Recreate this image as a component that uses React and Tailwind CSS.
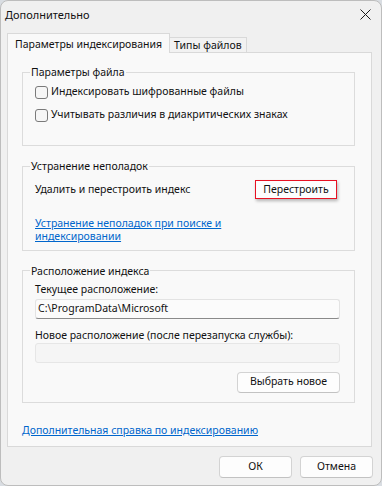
import React from "react";

const font = { fontFamily: '"Noto Sans", "Liberation Sans", sans-serif' };

function Checkbox({ label }) {
  return (
    <label className="flex h-[18px] items-center gap-[3px]">
      <span className="h-[13px] w-[13px] rounded-[3px] border border-[#7a7a7a] bg-[#f6f6f6]" />
      <span>{label}</span>
    </label>
  );
}

function Group({ title, className = "", children }) {
  return (
    <fieldset className={`border border-[#dcdcdc] pl-[12px] pr-[14px] ${className}`}>
      <legend className="-ml-[5px] px-[1px] leading-[16px]">{title}</legend>
      {children}
    </fieldset>
  );
}

function WinButton({ children, className = "" }) {
  return (
    <button className={`flex items-center justify-center rounded-[4px] border border-[#d3d3d3] border-b-[#c2c2c2] bg-[#fdfdfd] text-[#111] ${className}`}>
      {children}
    </button>
  );
}

export default function App() {
  return (
    <div className="h-[486px] w-[382px] bg-[#d9dde2]" style={font}>
      <div className="flex h-full flex-col rounded-[8px] border border-[#bdbdbd] bg-[#f0f0f0] text-[10.5px] text-[#111]">
        {/* TITLE BAR */}
        <div className="flex h-[27px] items-center justify-between pl-[4px] pr-[10px]">
          <span className="text-[11px] leading-[16px]">Дополнительно</span>
          <svg width="11" height="11" viewBox="0 0 11 11" className="mt-[-1px]">
            <path d="M0.5 0.5 L10.5 10.5 M10.5 0.5 L0.5 10.5" stroke="#1a1a1a" strokeWidth="1" />
          </svg>
        </div>

        {/* TABS */}
        <div className="mt-[5px] flex items-end pl-[6px]">
          <div className="relative z-10 -mb-px flex h-[20px] items-start border border-b-0 border-[#d9d9d9] bg-[#f9f9f9] px-[7px] pt-[2px] leading-[16px]">
            Параметры индексирования
          </div>
          <div className="flex h-[15px] items-start border-r border-t border-[#d9d9d9] bg-[#f2f2f2] px-[4px] leading-[14px]">
            Типы файлов
          </div>
        </div>

        {/* PANEL */}
        <div className="ml-[6px] mr-[9px] flex h-[395px] flex-col border border-[#d9d9d9] bg-[#f9f9f9] pl-[14px] pr-[16px] pt-[11px]">
          <Group title="Параметры файла" className="pb-[21px] pt-[3px]">
            <Checkbox label="Индексировать шифрованные файлы" />
            <div className="mt-[5px]">
              <Checkbox label="Учитывать различия в диакритических знаках" />
            </div>
          </Group>

          <Group title="Устранение неполадок" className="mt-[12px] pb-[6px] pt-[6px]">
            <div className="flex items-center justify-between">
              <span>Удалить и перестроить индекс</span>
              <button className="mr-[3px] flex h-[19px] w-[82px] items-center justify-center border border-[#e81123] bg-[#fdfdfd] shadow-[1px_2px_3px_rgba(0,0,0,0.28)]">
                Перестроить
              </button>
            </div>
            <a className="mt-[18px] block w-[200px] leading-[13.4px] text-[#0066cc] underline">
              Устранение неполадок при поиске и индексировании
            </a>
          </Group>

          <Group title="Расположение индекса" className="mt-[12px] pb-[9px] pt-[2px]">
            <div className="leading-[16px]">Текущее расположение:</div>
            <div className="mt-[2px] flex h-[20px] items-center rounded-[3px] border border-[#e3e3e3] border-b-[#8a8a8a] bg-[#fbfbfb] pl-[2px]">
              C:\ProgramData\Microsoft
            </div>
            <div className="mt-[8px] leading-[16px]">Новое расположение (после перезапуска службы):</div>
            <div className="h-[20px] rounded-[3px] border border-[#e6e6e6] bg-[#f5f5f5]" />
            <div className="mt-[9px] flex justify-end">
              <WinButton className="h-[21px] w-[103px]">Выбрать новое</WinButton>
            </div>
          </Group>

          <a className="mt-[19px] self-start leading-[16px] text-[#0066cc] underline">
            Дополнительная справка по индексированию
          </a>
        </div>

        {/* FOOTER */}
        <div className="mt-[9px] flex justify-end gap-[8px] pr-[8px]">
          <WinButton className="h-[22px] w-[73px] border-[#0067c0] border-b-[#0067c0]">ОК</WinButton>
          <WinButton className="h-[22px] w-[73px]">Отмена</WinButton>
        </div>
      </div>
    </div>
  );
}
